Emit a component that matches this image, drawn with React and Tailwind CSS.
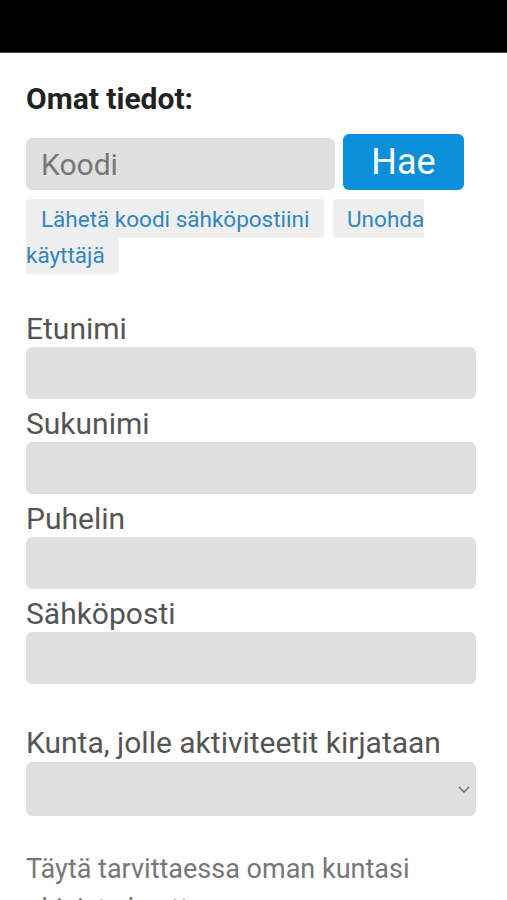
import React from "react";

const font = { fontFamily: "Roboto, 'Noto Sans', sans-serif" };

function Field({ label }) {
  return (
    <div className="mb-[7px]">
      <div className="text-[30px] leading-[36px] text-[#555555]">{label}</div>
      <div className="h-[52px] rounded-[6px] bg-[#e0e0e0]" />
    </div>
  );
}

export default function App() {
  return (
    <div className="min-h-[900px] bg-white" style={font}>
      <div className="h-[53px] bg-black border-b border-[#444]" />
      <div className="px-[26px] pr-[31px]">
        <h1 className="mt-[28px] text-[30px] leading-[36px] font-bold text-[#222222]">Omat tiedot:</h1>
        <div className="mt-[17px] flex items-end gap-[8px]">
          <div className="h-[52px] w-[309px] rounded-[6px] bg-[#e0e0e0] flex items-center pl-[15px] text-[30px] text-[#777777]">
            Koodi
          </div>
          <button className="h-[56px] w-[121px] rounded-[6px] bg-[#0b8fd8] text-white text-[36px] leading-none">
            Hae
          </button>
        </div>
        <p className="mt-[10px] text-[22.5px] leading-[36px] text-[#2f86c0]">
          <span className="bg-[#efefef] px-[15px] py-[6.5px] rounded-[4px] mr-[3px]">Lähetä koodi sähköpostiini</span>{" "}
          <span className="bg-[#efefef] px-[14px] py-[6.5px] rounded-[4px]">Unohda käyttäjä</span>
        </p>
        <div className="mt-[39px]">
          <Field label="Etunimi" />
          <Field label="Sukunimi" />
          <Field label="Puhelin" />
          <Field label="Sähköposti" />
        </div>
        <div className="mt-[41px]">
          <div className="text-[30px] leading-[36px] text-[#555555]">Kunta, jolle aktiviteetit kirjataan</div>
          <div className="mt-[1px] h-[54px] rounded-[6px] bg-[#e0e0e0] flex items-center justify-end pr-[6px]">
            <svg width="12" height="7" viewBox="0 0 12 7" fill="none">
              <path d="M1 1l5 5 5-5" stroke="#666" strokeWidth="1.3" />
            </svg>
          </div>
        </div>
        <p className="mt-[33px] text-[27px] leading-[40px] text-[#777777]">
          Täytä tarvittaessa oman kuntasi ohjeista kautta
        </p>
      </div>
    </div>
  );
}
